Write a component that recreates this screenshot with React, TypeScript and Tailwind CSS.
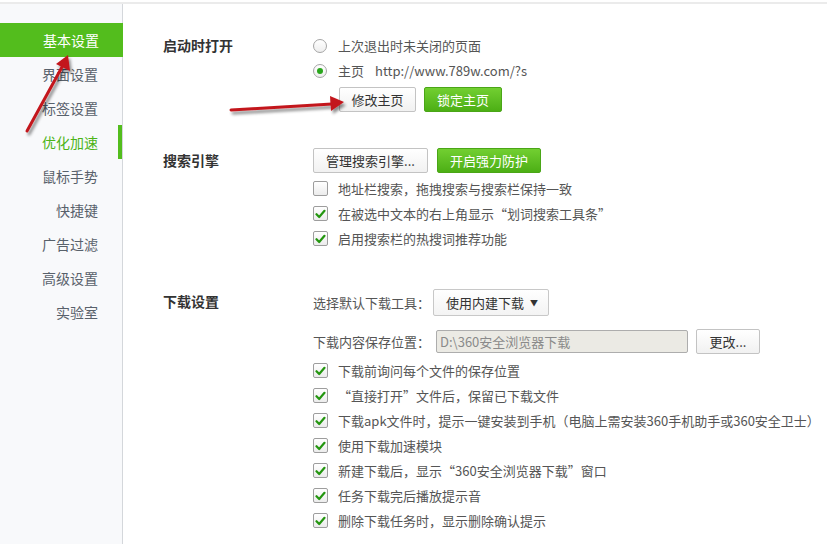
import React from 'react';

const navItems = ['基本设置', '界面设置', '标签设置', '优化加速', '鼠标手势', '快捷键', '广告过滤', '高级设置', '实验室'];

const Check: React.FC<{ checked?: boolean }> = ({ checked }) => (
  <span className="w-[15px] h-[15px] shrink-0 rounded-[2px] border border-[#9d9d9d] bg-gradient-to-b from-white to-[#ececec] flex items-center justify-center">
    {checked && (
      <svg width="11" height="10" viewBox="0 0 11 10">
        <path d="M1.5 5.2 L4.2 8 L9.5 1.8" fill="none" stroke="#23960f" strokeWidth="2.2" strokeLinecap="round" strokeLinejoin="round" />
      </svg>
    )}
  </span>
);

const Radio: React.FC<{ checked?: boolean }> = ({ checked }) => (
  <span className="w-[14px] h-[14px] shrink-0 rounded-full border border-[#a5a5a5] bg-gradient-to-b from-white to-[#eeeeee] flex items-center justify-center">
    {checked && <span className="w-[6px] h-[6px] rounded-full bg-[#2aa61c]" />}
  </span>
);

const GrayButton: React.FC<{ children: React.ReactNode; className?: string }> = ({ children, className }) => (
  <button className={`h-[25px] rounded-[2px] border border-[#c3c3c3] bg-gradient-to-b from-white to-[#f1f1f1] text-[13px] text-[#333] leading-none ${className ?? ''}`}>
    {children}
  </button>
);

const GreenButton: React.FC<{ children: React.ReactNode; className?: string }> = ({ children, className }) => (
  <button className={`h-[25px] rounded-[2px] border border-[#4aa617] bg-gradient-to-b from-[#72cf31] to-[#4caf14] text-[13px] text-white leading-none ${className ?? ''}`}>
    {children}
  </button>
);

const CheckRow: React.FC<{ checked?: boolean; children: React.ReactNode }> = ({ checked, children }) => (
  <div className="h-[25px] flex items-center">
    <Check checked={checked} />
    <span className="ml-[10px] whitespace-nowrap">{children}</span>
  </div>
);

const Section: React.FC<{ title: string; children: React.ReactNode; className?: string }> = ({ title, children, className }) => (
  <div className={`flex ${className ?? ''}`}>
    <div className="w-[150px] shrink-0 font-bold text-[14px] text-[#333]">{title}</div>
    <div className="flex-1">{children}</div>
  </div>
);

const Arrows: React.FC = () => (
  <svg className="absolute inset-0 pointer-events-none" width="827" height="544">
    <defs>
      <filter id="sh" x="-20%" y="-20%" width="140%" height="160%">
        <feDropShadow dx="2" dy="3" stdDeviation="1.8" floodColor="#000" floodOpacity="0.45" />
      </filter>
    </defs>
    <g filter="url(#sh)" fill="#c3161c" stroke="#c3161c">
      <line x1="231" y1="110" x2="332" y2="104" strokeWidth="3" strokeLinecap="round" />
      <polygon points="344,102 330,96 331,111" stroke="none" />
      <line x1="27" y1="131" x2="62" y2="67" strokeWidth="3" strokeLinecap="round" />
      <polygon points="68,55 56,64 70,71" stroke="none" />
    </g>
  </svg>
);

export default function App() {
  return (
    <div className="relative w-[827px] h-[544px] overflow-hidden bg-white font-['Noto_Sans_CJK_SC','Microsoft_YaHei',sans-serif] text-[13px] text-[#555]">
      <div className="h-[2px] bg-white" />
      <div className="h-[2px] bg-[#ebebeb]" />
      <div className="flex h-[540px]">
        {/* Sidebar */}
        <aside className="w-[123px] shrink-0 bg-[#f8f9fb] border-r border-[#d4d7db] pt-[19px]">
          {navItems.map((item) => {
            const active = item === '基本设置';
            const hover = item === '优化加速';
            return (
              <div
                key={item}
                className={`relative h-[34px] flex items-center justify-end pr-[24px] text-[14px] ${
                  active ? 'bg-[#53bd1d] text-white -mr-px' : hover ? 'text-[#4cb417]' : 'text-[#58616b]'
                }`}
              >
                {item}
                {hover && <span className="absolute right-0 top-0 w-[4px] h-[34px] bg-[#53bd1d]" />}
              </div>
            );
          })}
        </aside>

        {/* Content */}
        <main className="flex-1 pl-[40px] pt-[29px] leading-[25px]">
          <Section title="启动时打开">
            <div className="h-[25px] flex items-center">
              <Radio />
              <span className="ml-[11px]">上次退出时未关闭的页面</span>
            </div>
            <div className="h-[25px] flex items-center">
              <Radio checked />
              <span className="ml-[11px]">主页</span>
              <span className="ml-[11px]">http://www.789w.com/?s</span>
            </div>
            <div className="flex gap-[8px] mt-[4px] ml-[26px]">
              <GrayButton className="w-[77px]">修改主页</GrayButton>
              <GreenButton className="w-[78px]">锁定主页</GreenButton>
            </div>
          </Section>

          <Section title="搜索引擎" className="mt-[36px]">
            <div className="flex gap-[9px] h-[25px]">
              <GrayButton className="w-[115px]">管理搜索引擎...</GrayButton>
              <GreenButton className="w-[104px]">开启强力防护</GreenButton>
            </div>
            <div className="mt-[3px]">
              <CheckRow>地址栏搜索，拖拽搜索与搜索栏保持一致</CheckRow>
              <CheckRow checked>在被选中文本的右上角显示“划词搜索工具条”</CheckRow>
              <CheckRow checked>启用搜索栏的热搜词推荐功能</CheckRow>
            </div>
          </Section>

          <Section title="下载设置" className="mt-[38px]">
            <div className="flex items-center h-[27px]">
              <span>选择默认下载工具：</span>
              <div className="ml-[3px] w-[116px] h-[27px] rounded-[2px] border border-[#c8c8c8] bg-gradient-to-b from-white to-[#f3f3f3] flex items-center pl-[12px] pr-[10px] text-[#333]">
                <span className="flex-1">使用内建下载</span>
                <span className="text-[8px] leading-none">▼</span>
              </div>
            </div>
            <div className="flex items-center h-[25px] mt-[13px]">
              <span>下载内容保存位置：</span>
              <div className="ml-[6px] w-[252px] h-[23px] border border-[#adadad] rounded-[2px] bg-[#ebeae4] flex items-center pl-[3px] text-[#8a8a8a]">
                D:\360安全浏览器下载
              </div>
              <GrayButton className="ml-[8px] w-[64px]">更改...</GrayButton>
            </div>
            <div className="mt-[4px]">
              <CheckRow checked>下载前询问每个文件的保存位置</CheckRow>
              <CheckRow checked>“直接打开”文件后，保留已下载文件</CheckRow>
              <CheckRow checked>下载apk文件时，提示一键安装到手机（电脑上需安装360手机助手或360安全卫士）</CheckRow>
              <CheckRow checked>使用下载加速模块</CheckRow>
              <CheckRow checked>新建下载后，显示“360安全浏览器下载”窗口</CheckRow>
              <CheckRow checked>任务下载完后播放提示音</CheckRow>
              <CheckRow checked>删除下载任务时，显示删除确认提示</CheckRow>
            </div>
          </Section>
        </main>
      </div>
      <Arrows />
    </div>
  );
}
